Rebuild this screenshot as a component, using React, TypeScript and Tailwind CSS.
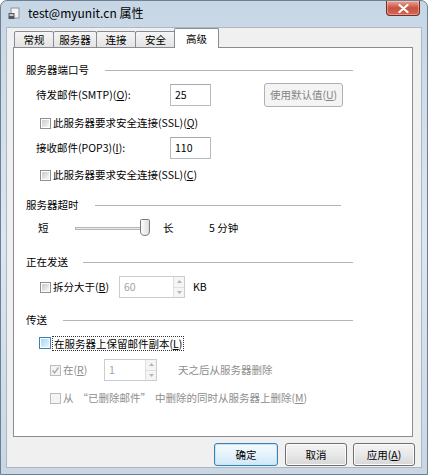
import React from "react";

type CheckState = "normal" | "hot" | "disabled" | "disabledChecked";

function Checkbox({ state = "normal" }: { state?: CheckState }) {
  if (state === "hot") {
    return (
      <span className="w-[12px] h-[12px] shrink-0 border border-[#3c7fb1] bg-white p-[1px]">
        <span className="block w-full h-full bg-gradient-to-br from-[#a9d6f5] to-[#e6f4fd]" />
      </span>
    );
  }
  if (state === "disabled" || state === "disabledChecked") {
    return (
      <span className="w-[11px] h-[11px] shrink-0 border border-[#bcbcbc] bg-[#f4f4f4] flex items-center justify-center">
        {state === "disabledChecked" ? (
          <svg width="9" height="9" viewBox="0 0 9 9">
            <path d="M1.5 4.5 L3.5 7 L7.5 1.5" fill="none" stroke="#a8a8a8" strokeWidth="1.3" />
          </svg>
        ) : null}
      </span>
    );
  }
  return (
    <span className="w-[11px] h-[11px] shrink-0 border border-[#8e8f8f] bg-white p-[1px]">
      <span className="block w-full h-full bg-gradient-to-br from-[#cbcbcb] to-[#f6f6f6]" />
    </span>
  );
}

function GroupHeader({ label, box, line }: { label: string; box: string; line: string }) {
  return (
    <div className="flex items-center h-[16px] pl-[12px]">
      <span className={`${box} shrink-0`}>{label}</span>
      <span className={`${line} h-px bg-[#b4b4b4]`} />
    </div>
  );
}

function Spinner({ value, width }: { value: string; width: string }) {
  return (
    <div className={`${width} h-[22px] flex border border-[#c9ccd1] bg-white`}>
      <span className="flex-1 pl-[4px] leading-[20px] text-[#a3a3a3]">{value}</span>
      <div className="w-[11px] flex flex-col border-l border-[#dcdfe3]">
        <span className="flex-1 flex items-center justify-center border-b border-[#dcdfe3] bg-[#f5f5f5]">
          <svg width="5" height="3" viewBox="0 0 5 3">
            <path d="M0 3 L2.5 0 L5 3 Z" fill="#b5b5b5" />
          </svg>
        </span>
        <span className="flex-1 flex items-center justify-center bg-[#f5f5f5]">
          <svg width="5" height="3" viewBox="0 0 5 3">
            <path d="M0 0 L2.5 3 L5 0 Z" fill="#b5b5b5" />
          </svg>
        </span>
      </div>
    </div>
  );
}

function TextBox({ value }: { value: string }) {
  return (
    <div className="w-[41px] h-[22px] border border-[#b7bcc3] border-t-[#a6abb3] bg-white pl-[4px] leading-[20px]">
      {value}
    </div>
  );
}

function Tab({ label, width, active = false }: { label: string; width: string; active?: boolean }) {
  if (active) {
    return (
      <div
        className={`${width} h-[20px] -ml-[2px] relative z-10 bg-white border border-b-0 border-[#898c95] rounded-t-[2px] flex items-center justify-center`}
      >
        {label}
      </div>
    );
  }
  return (
    <div
      className={`${width} h-[17px] -ml-px first:ml-0 bg-gradient-to-b from-[#f5f5f5] to-[#e4e4e4] border border-[#898c95] rounded-t-[2px] flex items-center justify-center`}
    >
      {label}
    </div>
  );
}

function DialogButton({ label, width, isDefault = false }: { label: React.ReactNode; width: string; isDefault?: boolean }) {
  return (
    <button
      className={`${width} h-[23px] rounded-[3px] border ${
        isDefault
          ? "border-[#3c7fb1] bg-gradient-to-b from-[#f4fafe] via-[#e6f3fc] to-[#cfe7f8] shadow-[inset_0_0_0_1px_#c8e5f8]"
          : "border-[#707070] bg-gradient-to-b from-[#f3f3f3] via-[#e9e9e9] to-[#d6d6d6] shadow-[inset_0_0_0_1px_#fbfbfb]"
      } text-black`}
    >
      {label}
    </button>
  );
}

export default function App() {
  return (
    <div className="w-[428px] h-[475px] flex flex-col border border-[#6e7f91] rounded-t-[7px] bg-gradient-to-b from-[#c7d6e5] via-[#dce6f0] to-[#c9d7e5] font-['Noto_Sans_CJK_SC','Microsoft_YaHei',sans-serif] text-[10.5px] text-black overflow-hidden">
      {/* title bar */}
      <div className="h-[26px] flex items-start shrink-0">
        <div className="flex items-center h-[24px] pl-[7px]">
          <svg width="12" height="13" viewBox="0 0 12 13">
            <rect x="3" y="1" width="8" height="10" fill="#f4f4f4" stroke="#8d949b" strokeWidth="1" />
            <rect x="0.5" y="6" width="6" height="6" fill="#55595e" />
            <rect x="1.5" y="7" width="4" height="2" fill="#c4c8cc" />
          </svg>
          <span className="ml-[8px] text-[12px] text-black">test@myunit.cn 属性</span>
        </div>
        <div className="ml-auto mr-[7px] w-[34px] h-[15px] rounded-b-[4px] border border-t-0 border-[#7a2a20] bg-gradient-to-b from-[#e8a596] via-[#c9513e] to-[#d0695a] flex items-center justify-center shadow-[inset_0_0_0_1px_rgba(255,255,255,0.35)]">
          <svg width="11" height="9" viewBox="0 0 11 9">
            <path d="M1.5 1 L9.5 8 M9.5 1 L1.5 8" stroke="white" strokeWidth="2.2" strokeLinecap="round" />
          </svg>
        </div>
      </div>

      {/* client */}
      <div className="flex-1 ml-[5px] mr-[5px] mb-[6px] bg-[#f0f0f0] border border-[#aab7c5] flex flex-col">
        <div className="flex items-end h-[20px] ml-[7px]">
          <Tab label="常规" width="w-[40px]" />
          <Tab label="服务器" width="w-[44px]" />
          <Tab label="连接" width="w-[40px]" />
          <Tab label="安全" width="w-[41px]" />
          <Tab label="高级" width="w-[45px]" active />
        </div>

        <div className="ml-[6px] -mt-px w-[400px] h-[390px] bg-white border border-[#898c95] flex flex-col">
          <div className="mt-[14px]">
            <GroupHeader label="服务器端口号" box="w-[79px]" line="w-[248px]" />
          </div>

          <div className="mt-[5px] h-[24px] flex items-center pl-[22px]">
            <span className="w-[134px] shrink-0">
              待发邮件(SMTP)(<span className="underline">O</span>):
            </span>
            <TextBox value="25" />
            <div className="ml-[53px] w-[79px] h-[24px] rounded-[3px] border border-[#adb2b5] bg-[#f4f4f4] text-[#838383] flex items-center justify-center">
              使用默认值(<span className="underline">U</span>)
            </div>
          </div>

          <div className="mt-[8px] h-[16px] flex items-center pl-[26px] gap-[2px]">
            <Checkbox />
            <span>
              此服务器要求安全连接(SSL)(<span className="underline">Q</span>)
            </span>
          </div>

          <div className="mt-[5px] h-[24px] flex items-center pl-[22px]">
            <span className="w-[134px] shrink-0">
              接收邮件(POP3)(<span className="underline">I</span>):
            </span>
            <TextBox value="110" />
          </div>

          <div className="mt-[7px] h-[16px] flex items-center pl-[26px] gap-[2px]">
            <Checkbox />
            <span>
              此服务器要求安全连接(SSL)(<span className="underline">C</span>)
            </span>
          </div>

          <div className="mt-[14px]">
            <GroupHeader label="服务器超时" box="w-[69px]" line="w-[246px]" />
          </div>

          <div className="mt-[5px] h-[20px] flex items-center pl-[24px]">
            <span className="w-[37px] shrink-0">短</span>
            <div className="relative w-[76px] h-[18px]">
              <span className="absolute left-0 right-[6px] top-[8px] h-[3px] border border-[#b4b7ba] bg-[#e7eaea]" />
              <svg className="absolute left-[65px] top-0" width="10" height="17" viewBox="0 0 10 17">
                <defs>
                  <linearGradient id="thumb" x1="0" y1="0" x2="1" y2="0">
                    <stop offset="0" stopColor="#ffffff" />
                    <stop offset="1" stopColor="#dcdcdc" />
                  </linearGradient>
                </defs>
                <path
                  d="M1.5 0.5 H8.5 Q9.5 0.5 9.5 1.5 V12 Q9.5 16.5 5 16.5 Q0.5 16.5 0.5 12 V1.5 Q0.5 0.5 1.5 0.5 Z"
                  fill="url(#thumb)"
                  stroke="#7b7b7b"
                />
              </svg>
            </div>
            <span className="ml-[12px] w-[46px] shrink-0">长</span>
            <span>5 分钟</span>
          </div>

          <div className="mt-[16px]">
            <GroupHeader label="正在发送" box="w-[57px]" line="w-[270px]" />
          </div>

          <div className="mt-[5px] h-[24px] flex items-center pl-[26px]">
            <div className="w-[79px] shrink-0 flex items-center gap-[2px]">
              <Checkbox />
              <span>
                拆分大于(<span className="underline">B</span>)
              </span>
            </div>
            <Spinner value="60" width="w-[66px]" />
            <span className="ml-[8px]">KB</span>
          </div>

          <div className="mt-[13px]">
            <GroupHeader label="传送" box="w-[37px]" line="w-[290px]" />
          </div>

          <div className="mt-[6px] h-[18px] flex items-center pl-[25px] gap-px">
            <Checkbox state="hot" />
            <span className="border border-dotted border-[#333] px-px leading-[13px]">
              在服务器上保留邮件副本(<span className="underline">L</span>)
            </span>
          </div>

          <div className="mt-[6px] h-[24px] flex items-center pl-[36px] text-[#8d8d8d]">
            <div className="w-[54px] shrink-0 flex items-center gap-[2px]">
              <Checkbox state="disabledChecked" />
              <span>
                在(<span className="underline">R</span>)
              </span>
            </div>
            <Spinner value="1" width="w-[53px]" />
            <span className="ml-[21px]">天之后从服务器删除</span>
          </div>

          <div className="mt-[8px] h-[16px] flex items-center pl-[36px] gap-[2px] text-[#8d8d8d]">
            <Checkbox state="disabled" />
            <span>
              从<span className="ml-[4px]">“已删除邮件”</span>
              <span className="ml-[4px]">中删除的同时从服务器上删除(</span>
              <span className="underline">M</span>)
            </span>
          </div>
        </div>

        <div className="mt-[6px] flex justify-end pr-[6px]">
          <DialogButton label="确定" width="w-[64px]" isDefault />
          <div className="w-[7px]" />
          <DialogButton label="取消" width="w-[62px]" />
          <div className="w-[6px]" />
          <DialogButton
            label={
              <span>
                应用(<span className="underline">A</span>)
              </span>
            }
            width="w-[62px]"
          />
        </div>
      </div>
    </div>
  );
}
